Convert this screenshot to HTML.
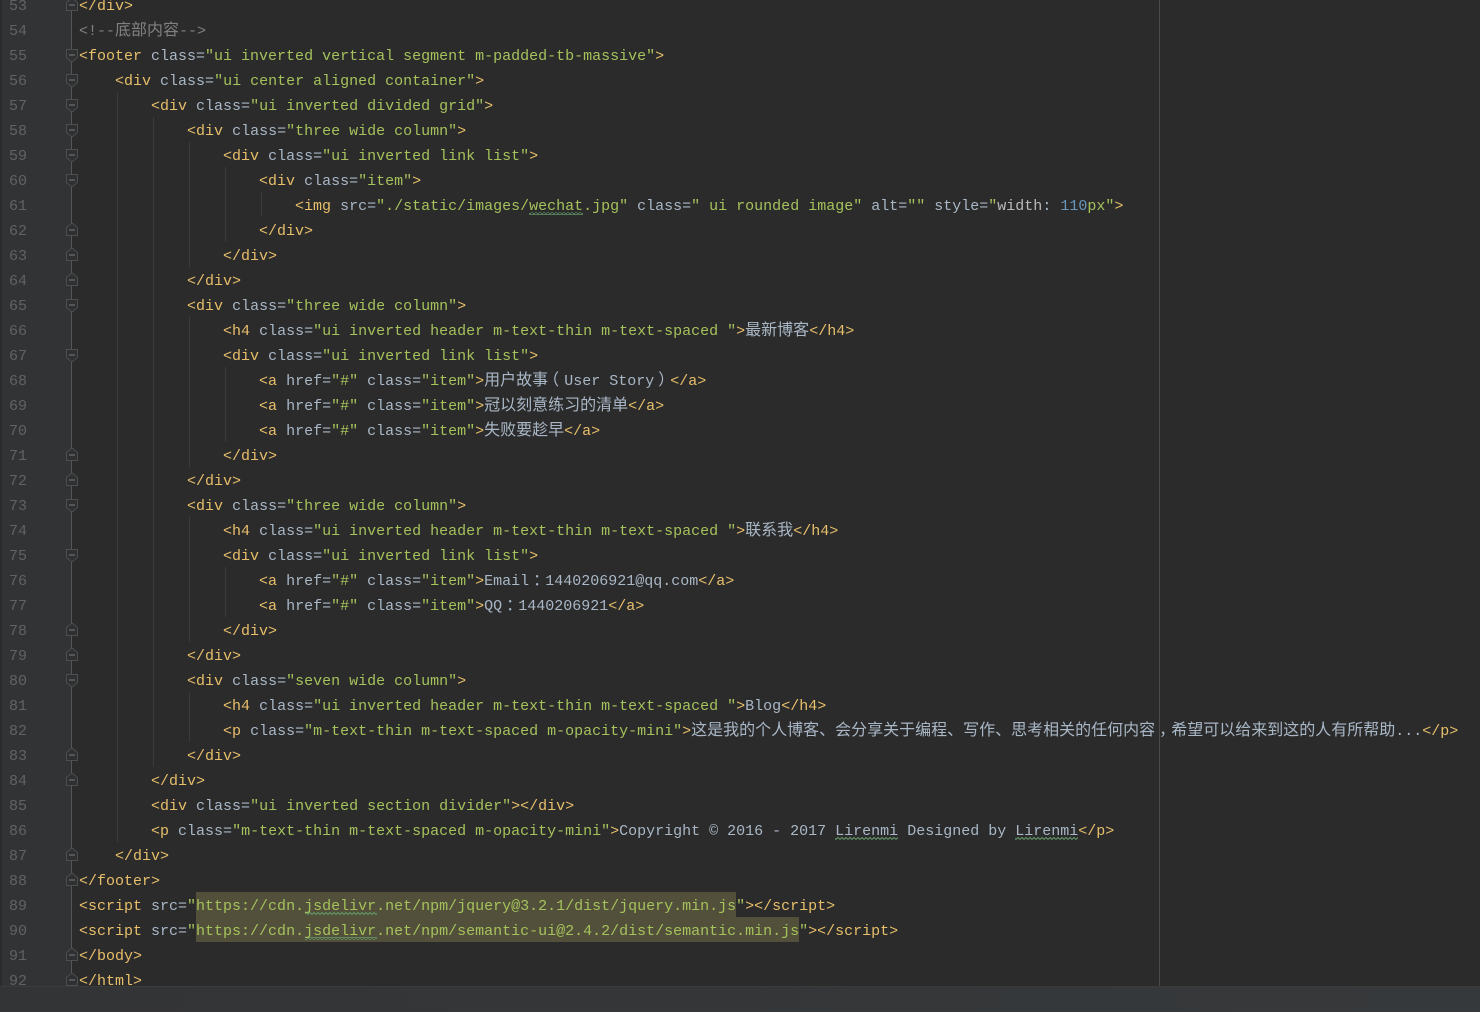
<!DOCTYPE html>
<html lang="zh"><head><meta charset="utf-8"><title>footer source</title>
<style>
html,body{margin:0;padding:0;background:#2b2b2b}
#r{position:relative;width:1480px;height:1012px;overflow:hidden;background:#2b2b2b;font:15px/25px "Liberation Mono","Noto Sans CJK SC",monospace;color:#a9b7c6}
.g{position:absolute;left:2px;top:0;width:70px;height:986px;background:#313335}
.h{position:absolute;left:196px;height:25px;background:#52503a}
.m{position:absolute;left:1159px;top:0;width:1px;height:986px;background:#4a4a4a}
.i{position:absolute;width:1px;background:#3b3b3b}
.s{position:absolute;left:0;top:986px;width:1480px;height:26px;background:linear-gradient(90deg,#333436,#36393b);border-top:1px solid #3a3b3b;box-sizing:border-box}
.n{position:absolute;left:0;width:27px;margin-top:2px;text-align:right;color:#606366;height:25px}
.l{position:absolute;left:79px;margin-top:2px;white-space:pre;height:25px}
svg{position:absolute;left:0;top:0}
b{font-weight:400;color:#e8bf6a}
i{font-style:normal;color:#a9b7c6}
u{text-decoration:none;color:#a5c25c}
s{text-decoration:none;font-size:16px;font-family:"Noto Sans CJK SC","WenQuanYi Zen Hei",sans-serif;line-height:0}
.pl{position:relative;left:-5px}
.pr{position:relative;left:4px}
.c{color:#808080}
</style></head><body><div id="r">
<div class="g"></div>
<div class="h" style="top:892px;width:540px"></div>
<div class="h" style="top:917px;width:603px"></div>
<div class="m"></div>
<div class="i" style="left:117px;top:92px;height:750px"></div>
<div class="i" style="left:153px;top:117px;height:650px"></div>
<div class="i" style="left:189px;top:142px;height:125px"></div>
<div class="i" style="left:225px;top:167px;height:75px"></div>
<div class="i" style="left:261px;top:192px;height:25px"></div>
<div class="i" style="left:189px;top:317px;height:150px"></div>
<div class="i" style="left:225px;top:367px;height:75px"></div>
<div class="i" style="left:189px;top:517px;height:125px"></div>
<div class="i" style="left:225px;top:567px;height:50px"></div>
<div class="i" style="left:189px;top:692px;height:50px"></div>
<svg width="1480" height="1012" viewBox="0 0 1480 1012" fill="none">
<defs>
<pattern id="w" width="4" height="3" patternUnits="userSpaceOnUse"><path d="M0 2.5L2 .5L4 2.5" stroke="#659c6b" stroke-width="1"/></pattern>
<g id="o"><path d="M-5.5-5.5H5.5V2.5L0 7L-5.5 2.5Z" fill="#2f3031" stroke="#4c4e4f"/><path d="M-3 0H3" stroke="#7a7c7d"/></g>
<g id="e"><path d="M-5.5 5.5H5.5V-2.5L0-7L-5.5-2.5Z" fill="#2f3031" stroke="#4c4e4f"/><path d="M-3 0H3" stroke="#7a7c7d"/></g>
</defs>
<path d="M71.5 0V980" stroke="#555759"/>
<use href="#e" x="72" y="5"/><use href="#o" x="72" y="55"/><use href="#o" x="72" y="80"/><use href="#o" x="72" y="105"/><use href="#o" x="72" y="130"/><use href="#o" x="72" y="155"/><use href="#o" x="72" y="180"/>
<use href="#e" x="72" y="230"/><use href="#e" x="72" y="255"/><use href="#e" x="72" y="280"/><use href="#o" x="72" y="305"/><use href="#o" x="72" y="355"/>
<use href="#e" x="72" y="455"/><use href="#e" x="72" y="480"/><use href="#o" x="72" y="505"/><use href="#o" x="72" y="555"/><use href="#e" x="72" y="630"/><use href="#e" x="72" y="655"/><use href="#o" x="72" y="680"/>
<use href="#e" x="72" y="755"/><use href="#e" x="72" y="780"/><use href="#e" x="72" y="855"/><use href="#e" x="72" y="880"/><use href="#e" x="72" y="955"/><use href="#e" x="72" y="980"/>
<rect x="529" y="212" width="54" height="3" fill="url(#w)"/>
<rect x="835" y="837" width="63" height="3" fill="url(#w)"/>
<rect x="1015" y="837" width="63" height="3" fill="url(#w)"/>
<rect x="305" y="912" width="72" height="3" fill="url(#w)"/>
<rect x="305" y="937" width="72" height="3" fill="url(#w)"/>
</svg>
<div class="s"></div>

<div class="n" style="top:-8px">53</div><div class="n" style="top:17px">54</div><div class="n" style="top:42px">55</div><div class="n" style="top:67px">56</div><div class="n" style="top:92px">57</div><div class="n" style="top:117px">58</div><div class="n" style="top:142px">59</div><div class="n" style="top:167px">60</div><div class="n" style="top:192px">61</div><div class="n" style="top:217px">62</div><div class="n" style="top:242px">63</div><div class="n" style="top:267px">64</div><div class="n" style="top:292px">65</div><div class="n" style="top:317px">66</div><div class="n" style="top:342px">67</div><div class="n" style="top:367px">68</div><div class="n" style="top:392px">69</div><div class="n" style="top:417px">70</div><div class="n" style="top:442px">71</div><div class="n" style="top:467px">72</div><div class="n" style="top:492px">73</div><div class="n" style="top:517px">74</div><div class="n" style="top:542px">75</div><div class="n" style="top:567px">76</div><div class="n" style="top:592px">77</div><div class="n" style="top:617px">78</div><div class="n" style="top:642px">79</div><div class="n" style="top:667px">80</div><div class="n" style="top:692px">81</div><div class="n" style="top:717px">82</div><div class="n" style="top:742px">83</div><div class="n" style="top:767px">84</div><div class="n" style="top:792px">85</div><div class="n" style="top:817px">86</div><div class="n" style="top:842px">87</div><div class="n" style="top:867px">88</div><div class="n" style="top:892px">89</div><div class="n" style="top:917px">90</div><div class="n" style="top:942px">91</div><div class="n" style="top:967px;height:17px;overflow:hidden">92</div>

<div class="l" style="top:-8px"><b>&lt;/div&gt;</b></div>
<div class="l c" style="top:17px">&lt;!--<s>底部内容</s>--&gt;</div>
<div class="l" style="top:42px"><b>&lt;footer</b> <i>class=</i><u>"ui inverted vertical segment m-padded-tb-massive"</u><b>&gt;</b></div>
<div class="l" style="top:67px">    <b>&lt;div</b> <i>class=</i><u>"ui center aligned container"</u><b>&gt;</b></div>
<div class="l" style="top:92px">        <b>&lt;div</b> <i>class=</i><u>"ui inverted divided grid"</u><b>&gt;</b></div>
<div class="l" style="top:117px">            <b>&lt;div</b> <i>class=</i><u>"three wide column"</u><b>&gt;</b></div>
<div class="l" style="top:142px">                <b>&lt;div</b> <i>class=</i><u>"ui inverted link list"</u><b>&gt;</b></div>
<div class="l" style="top:167px">                    <b>&lt;div</b> <i>class=</i><u>"item"</u><b>&gt;</b></div>
<div class="l" style="top:192px">                        <b>&lt;img</b> <i>src=</i><u>"./static/images/wechat.jpg"</u> <i>class=</i><u>" ui rounded image"</u> <i>alt=</i><u>""</u> <i>style=</i><u>"</u><span style="color:#bababa">width</span><i>: </i><span style="color:#6897bb">110</span><u>px"</u><b>&gt;</b></div>
<div class="l" style="top:217px">                    <b>&lt;/div&gt;</b></div>
<div class="l" style="top:242px">                <b>&lt;/div&gt;</b></div>
<div class="l" style="top:267px">            <b>&lt;/div&gt;</b></div>
<div class="l" style="top:292px">            <b>&lt;div</b> <i>class=</i><u>"three wide column"</u><b>&gt;</b></div>
<div class="l" style="top:317px">                <b>&lt;h4</b> <i>class=</i><u>"ui inverted header m-text-thin m-text-spaced "</u><b>&gt;</b><s>最新博客</s><b>&lt;/h4&gt;</b></div>
<div class="l" style="top:342px">                <b>&lt;div</b> <i>class=</i><u>"ui inverted link list"</u><b>&gt;</b></div>
<div class="l" style="top:367px">                    <b>&lt;a</b> <i>href=</i><u>"#"</u> <i>class=</i><u>"item"</u><b>&gt;</b><s>用户故事</s><s class="pl">（</s>User Story<s class="pr">）</s><b>&lt;/a&gt;</b></div>
<div class="l" style="top:392px">                    <b>&lt;a</b> <i>href=</i><u>"#"</u> <i>class=</i><u>"item"</u><b>&gt;</b><s>冠以刻意练习的清单</s><b>&lt;/a&gt;</b></div>
<div class="l" style="top:417px">                    <b>&lt;a</b> <i>href=</i><u>"#"</u> <i>class=</i><u>"item"</u><b>&gt;</b><s>失败要趁早</s><b>&lt;/a&gt;</b></div>
<div class="l" style="top:442px">                <b>&lt;/div&gt;</b></div>
<div class="l" style="top:467px">            <b>&lt;/div&gt;</b></div>
<div class="l" style="top:492px">            <b>&lt;div</b> <i>class=</i><u>"three wide column"</u><b>&gt;</b></div>
<div class="l" style="top:517px">                <b>&lt;h4</b> <i>class=</i><u>"ui inverted header m-text-thin m-text-spaced "</u><b>&gt;</b><s>联系我</s><b>&lt;/h4&gt;</b></div>
<div class="l" style="top:542px">                <b>&lt;div</b> <i>class=</i><u>"ui inverted link list"</u><b>&gt;</b></div>
<div class="l" style="top:567px">                    <b>&lt;a</b> <i>href=</i><u>"#"</u> <i>class=</i><u>"item"</u><b>&gt;</b>Email<s class="pr">：</s>1440206921@qq.com<b>&lt;/a&gt;</b></div>
<div class="l" style="top:592px">                    <b>&lt;a</b> <i>href=</i><u>"#"</u> <i>class=</i><u>"item"</u><b>&gt;</b>QQ<s class="pr">：</s>1440206921<b>&lt;/a&gt;</b></div>
<div class="l" style="top:617px">                <b>&lt;/div&gt;</b></div>
<div class="l" style="top:642px">            <b>&lt;/div&gt;</b></div>
<div class="l" style="top:667px">            <b>&lt;div</b> <i>class=</i><u>"seven wide column"</u><b>&gt;</b></div>
<div class="l" style="top:692px">                <b>&lt;h4</b> <i>class=</i><u>"ui inverted header m-text-thin m-text-spaced "</u><b>&gt;</b>Blog<b>&lt;/h4&gt;</b></div>
<div class="l" style="top:717px">                <b>&lt;p</b> <i>class=</i><u>"m-text-thin m-text-spaced m-opacity-mini"</u><b>&gt;</b><s>这是我的个人博客、会分享关于编程、写作、思考相关的任何内容</s><s class="pr">，</s><s>希望可以给来到这的人有所帮助</s>...<b>&lt;/p&gt;</b></div>
<div class="l" style="top:742px">            <b>&lt;/div&gt;</b></div>
<div class="l" style="top:767px">        <b>&lt;/div&gt;</b></div>
<div class="l" style="top:792px">        <b>&lt;div</b> <i>class=</i><u>"ui inverted section divider"</u><b>&gt;&lt;/div&gt;</b></div>
<div class="l" style="top:817px">        <b>&lt;p</b> <i>class=</i><u>"m-text-thin m-text-spaced m-opacity-mini"</u><b>&gt;</b>Copyright © 2016 - 2017 Lirenmi Designed by Lirenmi<b>&lt;/p&gt;</b></div>
<div class="l" style="top:842px">    <b>&lt;/div&gt;</b></div>
<div class="l" style="top:867px"><b>&lt;/footer&gt;</b></div>
<div class="l" style="top:892px"><b>&lt;script</b> <i>src=</i><u>"https://cdn.jsdelivr.net/npm/jquery@3.2.1/dist/jquery.min.js"</u><b>&gt;&lt;/script&gt;</b></div>
<div class="l" style="top:917px"><b>&lt;script</b> <i>src=</i><u>"https://cdn.jsdelivr.net/npm/semantic-ui@2.4.2/dist/semantic.min.js"</u><b>&gt;&lt;/script&gt;</b></div>
<div class="l" style="top:942px"><b>&lt;/body&gt;</b></div>
<div class="l" style="top:967px;height:17px;overflow:hidden"><b>&lt;/html&gt;</b></div>
</div></body></html>
